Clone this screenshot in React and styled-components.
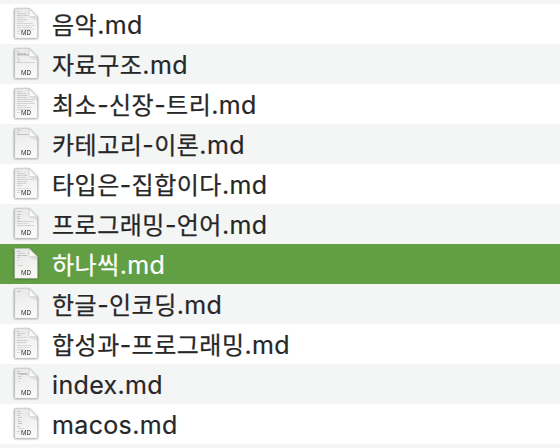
import React from "react";
import styled, { createGlobalStyle } from "styled-components";

const GlobalStyle = createGlobalStyle`
  * { box-sizing: border-box; }
  body { margin: 0; background: #fff; overflow: hidden; }
`;

const FileList = styled.div`
  display: flex;
  flex-direction: column;
  width: 560px;
  height: 448px;
  overflow: hidden;
`;

const Edge = styled.div`
  flex: 0 0 4px;
  background: #f4f5f5;
`;

const Row = styled.div`
  display: flex;
  align-items: flex-start;
  flex: 0 0 40px;
  height: 40px;
  padding-left: 12px;
  color: ${(p) => (p.$selected ? "#fff" : "#272727")};
  background: ${(p) => (p.$selected ? "#629e44" : p.$shaded ? "#f4f5f5" : "#fff")};
`;

const Icon = styled.svg`
  flex: 0 0 28px;
  width: 28px;
  height: 40px;
  opacity: 0.99;
`;

const Name = styled.div`
  display: flex;
  align-items: baseline;
  margin-left: 12px;
  height: 40px;
  line-height: 40px;
  white-space: pre;
  padding-top: ${(p) => (p.$latinOnly ? "1px" : "0")};
`;

const Hangul = styled.span`
  font-family: "Noto Sans CJK KR", sans-serif;
  font-size: 24px;
  letter-spacing: 0.5px;
  -webkit-text-stroke: 0.25px currentColor;
`;

const Latin = styled.span`
  font-family: Inter, sans-serif;
  font-size: 25px;
  letter-spacing: 0.35px;
  -webkit-text-stroke: 0.2px currentColor;
`;

/* Preview lines: [x, y, width, opacity] */
const previews = {
  music: [[17, 7, 2, 0.4], [17, 9, 9, 0.3], [17, 11, 11, 0.35], [17, 13, 8, 0.25], [17, 15, 10, 0.3], [17, 17, 7, 0.25], [17, 19, 16, 0.3], [17, 21, 18, 0.3], [17, 23, 15, 0.3], [17, 25, 17, 0.25], [17, 27, 3, 0.3], [17, 29, 3, 0.3]],
  data: [[17, 7, 2, 0.5], [17, 9, 9, 0.45], [17, 10, 12, 0.5], [17, 11, 12, 0.25], [17, 13, 2, 0.4], [18, 15, 2, 0.4], [17, 17, 2, 0.3], [17, 18, 18, 0.35]],
  tree: [[17, 7, 5, 0.3], [17, 9, 9, 0.35], [17, 11, 10, 0.35], [17, 13, 10, 0.35], [17, 15, 17, 0.35], [17, 17, 16, 0.35], [17, 19, 18, 0.3], [17, 21, 9, 0.3], [17, 23, 15, 0.3], [17, 25, 14, 0.3], [17, 28, 3, 0.3]],
  category: [[17, 6, 4, 0.35], [17, 8, 2, 0.35], [17, 10, 11, 0.5]],
  type: [[17, 7, 2, 0.4], [17, 9, 8, 0.3], [17, 11, 10, 0.35], [17, 13, 9, 0.25], [17, 15, 17, 0.3], [17, 17, 10, 0.35], [17, 19, 9, 0.35], [17, 21, 5, 0.35], [17, 24, 14, 0.25], [17, 26, 3, 0.3], [17, 28, 3, 0.3]],
  language: [[17, 7, 5, 0.35], [17, 10, 4, 0.4], [17, 12, 3, 0.35], [17, 14, 4, 0.4], [17, 16, 2, 0.3], [17, 17, 17, 0.35], [17, 19, 11, 0.25], [17, 21, 17, 0.35]],
  hanassik: [[17, 7, 3, 0.4], [18, 9, 7, 0.3], [17, 11, 10, 0.45], [17, 13, 3, 0.35], [17, 16, 2, 0.35], [18, 21, 5, 0.35]],
  hangul: [[17, 7, 4, 0.4]],
  synth: [[17, 7, 2, 0.4], [17, 9, 8, 0.3], [17, 11, 4, 0.35], [17, 13, 10, 0.25], [17, 16, 11, 0.35], [17, 18, 9, 0.35], [17, 21, 15, 0.25], [17, 23, 12, 0.25], [17, 25, 8, 0.3], [17, 28, 3, 0.3]],
  index: [[17, 7, 3, 0.4], [17, 9, 10, 0.5], [20, 10, 8, 0.45], [18, 12, 3, 0.35], [19, 14, 2, 0.4], [19, 17, 1, 0.4]],
  macos: [[17, 7, 3, 0.35], [18, 9, 3, 0.35], [17, 11, 3, 0.35], [18, 13, 4, 0.35], [17, 15, 3, 0.3], [18, 17, 4, 0.45], [18, 19, 4, 0.45], [17, 22, 3, 0.35], [18, 24, 6, 0.3], [17, 27, 3, 0.35], [17, 29, 2, 0.3]],
};

function FileIcon({ preview }) {
  return (
    <Icon viewBox="12 0 28 40" aria-hidden="true">
      <path d="M14.5 5h14.5l8.5 8.5v21h-23z" fill="#000" filter="url(#shadow)" />
      <path d="M14.7 4.4h14.3l8.4 8.4v21.5h-22.7z" fill="url(#paper)" stroke="#c8c8c8" strokeWidth=".5" />
      {previews[preview].map(([x, y, width, opacity], i) => (
        <path key={i} d={`M${x} ${y + 0.5}h${width}`} stroke="#777" strokeWidth="1" strokeDasharray="4 .3 2.3 .2" opacity={opacity * 0.8} />
      ))}
      <path d="M29 13h8.5v4z" fill="#777" opacity=".12" />
      <path d="M29 4.5v6.8q0 1.5 1.5 1.5h7z" fill="url(#fold)" stroke="#bcbcbc" strokeWidth=".6" />
      <rect x="20.5" y="26" width="11" height="6" fill="#f4f4f4" opacity=".85" />
      <text x="26" y="31" textAnchor="middle" fontFamily="Open Sans, sans-serif" fontSize="6.3" fontWeight="500" textLength="10" lengthAdjust="spacingAndGlyphs" fill="#111">MD</text>
    </Icon>
  );
}

const files = [
  ["음악.md", "music"],
  ["자료구조.md", "data"],
  ["최소-신장-트리.md", "tree"],
  ["카테고리-이론.md", "category"],
  ["타입은-집합이다.md", "type"],
  ["프로그래밍-언어.md", "language"],
  ["하나씩.md", "hanassik"],
  ["한글-인코딩.md", "hangul"],
  ["합성과-프로그래밍.md", "synth"],
  ["index.md", "index"],
  ["macos.md", "macos"],
];

const splitScripts = (name) => name.match(/[가-힣]+|[^가-힣]+/g);

const Defs = styled.svg`
  display: block;
  flex: none;
`;

export default function App() {
  return (
    <>
      <GlobalStyle />
      <Defs width="0" height="0" aria-hidden="true">
        <defs>
          <linearGradient id="paper" x1="0" y1="0" x2="0.3" y2="1">
            <stop offset="0" stopColor="#e6e6e6" />
            <stop offset="1" stopColor="#fafafa" />
          </linearGradient>
          <linearGradient id="fold" x1="0" y1="1" x2="1" y2="0">
            <stop offset="0" stopColor="#fff" />
            <stop offset="1" stopColor="#ececec" />
          </linearGradient>
          <filter id="shadow" x="-20%" y="-20%" width="140%" height="140%">
            <feGaussianBlur stdDeviation="0.8" />
            <feComponentTransfer>
              <feFuncA type="linear" slope="0.65" />
            </feComponentTransfer>
          </filter>
        </defs>
      </Defs>
      <FileList>
        <Edge />
        {files.map(([name, preview], i) => (
          <Row key={name} $selected={i === 6} $shaded={i % 2 === 1}>
            <FileIcon preview={preview} />
            <Name $latinOnly={!/[가-힣]/.test(name)}>
              {splitScripts(name).map((part, n) =>
                /[가-힣]/.test(part) ? <Hangul key={n}>{part}</Hangul> : <Latin key={n}>{part}</Latin>
              )}
            </Name>
          </Row>
        ))}
        <Edge />
      </FileList>
    </>
  );
}
